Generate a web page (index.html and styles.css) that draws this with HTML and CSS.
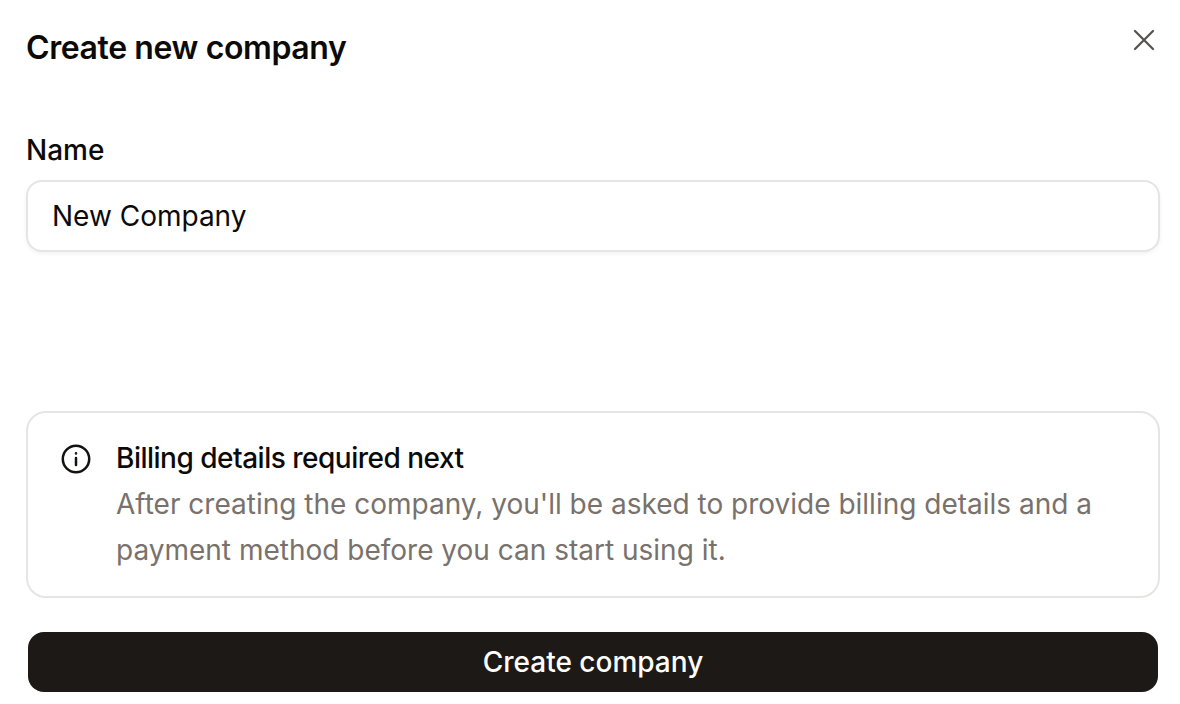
FILE: index.html
```html
<!DOCTYPE html>
<html lang="en">
<head>
    <meta charset="UTF-8">
    <title>Create new company</title>
    <link rel="stylesheet" href="styles.css">
</head>
<body>
    <div class="dialog">
        <div class="header">
            <h1 class="title">Create new company</h1>
            <button class="close" type="button" aria-label="Close">
                <svg width="24" height="24" viewBox="0 0 24 24" fill="none" stroke="#52514e" stroke-width="2.2" stroke-linecap="round">
                    <path d="M3 3 21 21M21 3 3 21"/>
                </svg>
            </button>
        </div>

        <label class="field-label" for="name">Name</label>
        <input class="field-input" id="name" type="text" value="New Company">

        <div class="notice">
            <svg class="notice-icon" width="32" height="32" viewBox="0 0 32 32" fill="none" stroke="#141210" stroke-width="2.5" stroke-linecap="round">
                <circle cx="16" cy="16" r="13.2"/>
                <path d="M16 15v7"/>
                <circle cx="16" cy="10.4" r="0.5" fill="#141210" stroke-width="1.6"/>
            </svg>
            <div class="notice-text">
                <div class="notice-title">Billing details required next</div>
                <p class="notice-desc">After creating the company, you'll be asked to provide billing details and a payment method before you can start using it.</p>
            </div>
        </div>

        <button class="submit" type="button">Create company</button>
    </div>
</body>
</html>
```
FILE: styles.css
```css
body{margin:0;background:#fff;font-family:Inter,"Liberation Sans",sans-serif;color:#0c0a09;}
h1,p{margin:0;}

.dialog{
    display:flex;
    flex-direction:column;
    height:704px;
    box-sizing:border-box;
    padding:28px 20px 0 26px;
    overflow:hidden;
}
.header{
    display:flex;
    justify-content:space-between;
    align-items:flex-start;
}
.title{
    font-size:32px;
    line-height:40px;
    font-weight:600;
    letter-spacing:-0.4px;
}
.close{
    margin:0 4px 0 0;
    padding:0;
    width:24px;
    height:24px;
    border:none;
    background:none;
}
.field-label{
    margin-top:62px;
    font-size:28px;
    line-height:40px;
    font-weight:500;
}
.field-input{
    margin-top:10px;
    height:72px;
    box-sizing:border-box;
    padding:0 24px;
    border:2px solid #e7e5e4;
    border-radius:16px;
    box-shadow:0 2px 4px rgba(0,0,0,.05);
    font-family:inherit;
    font-size:28px;
    color:#0c0a09;
    outline:none;
}
.notice{
    display:flex;
    gap:24px;
    margin-top:159px;
    height:187px;
    box-sizing:border-box;
    padding:22px 32px 0;
    border:2px solid #e7e5e4;
    border-radius:20px;
}
.notice-icon{
    flex:none;
    margin-top:8px;
}
.notice-title{
    font-size:28px;
    line-height:46px;
    font-weight:500;
    letter-spacing:-0.5px;
}
.notice-desc{
    font-size:28px;
    line-height:46px;
    color:#78716c;
}
.submit{
    margin:34px 2px 0;
    height:60px;
    border:none;
    border-radius:16px;
    background:#1c1917;
    color:#fff;
    font-family:inherit;
    font-size:28px;
    font-weight:500;
}
```
